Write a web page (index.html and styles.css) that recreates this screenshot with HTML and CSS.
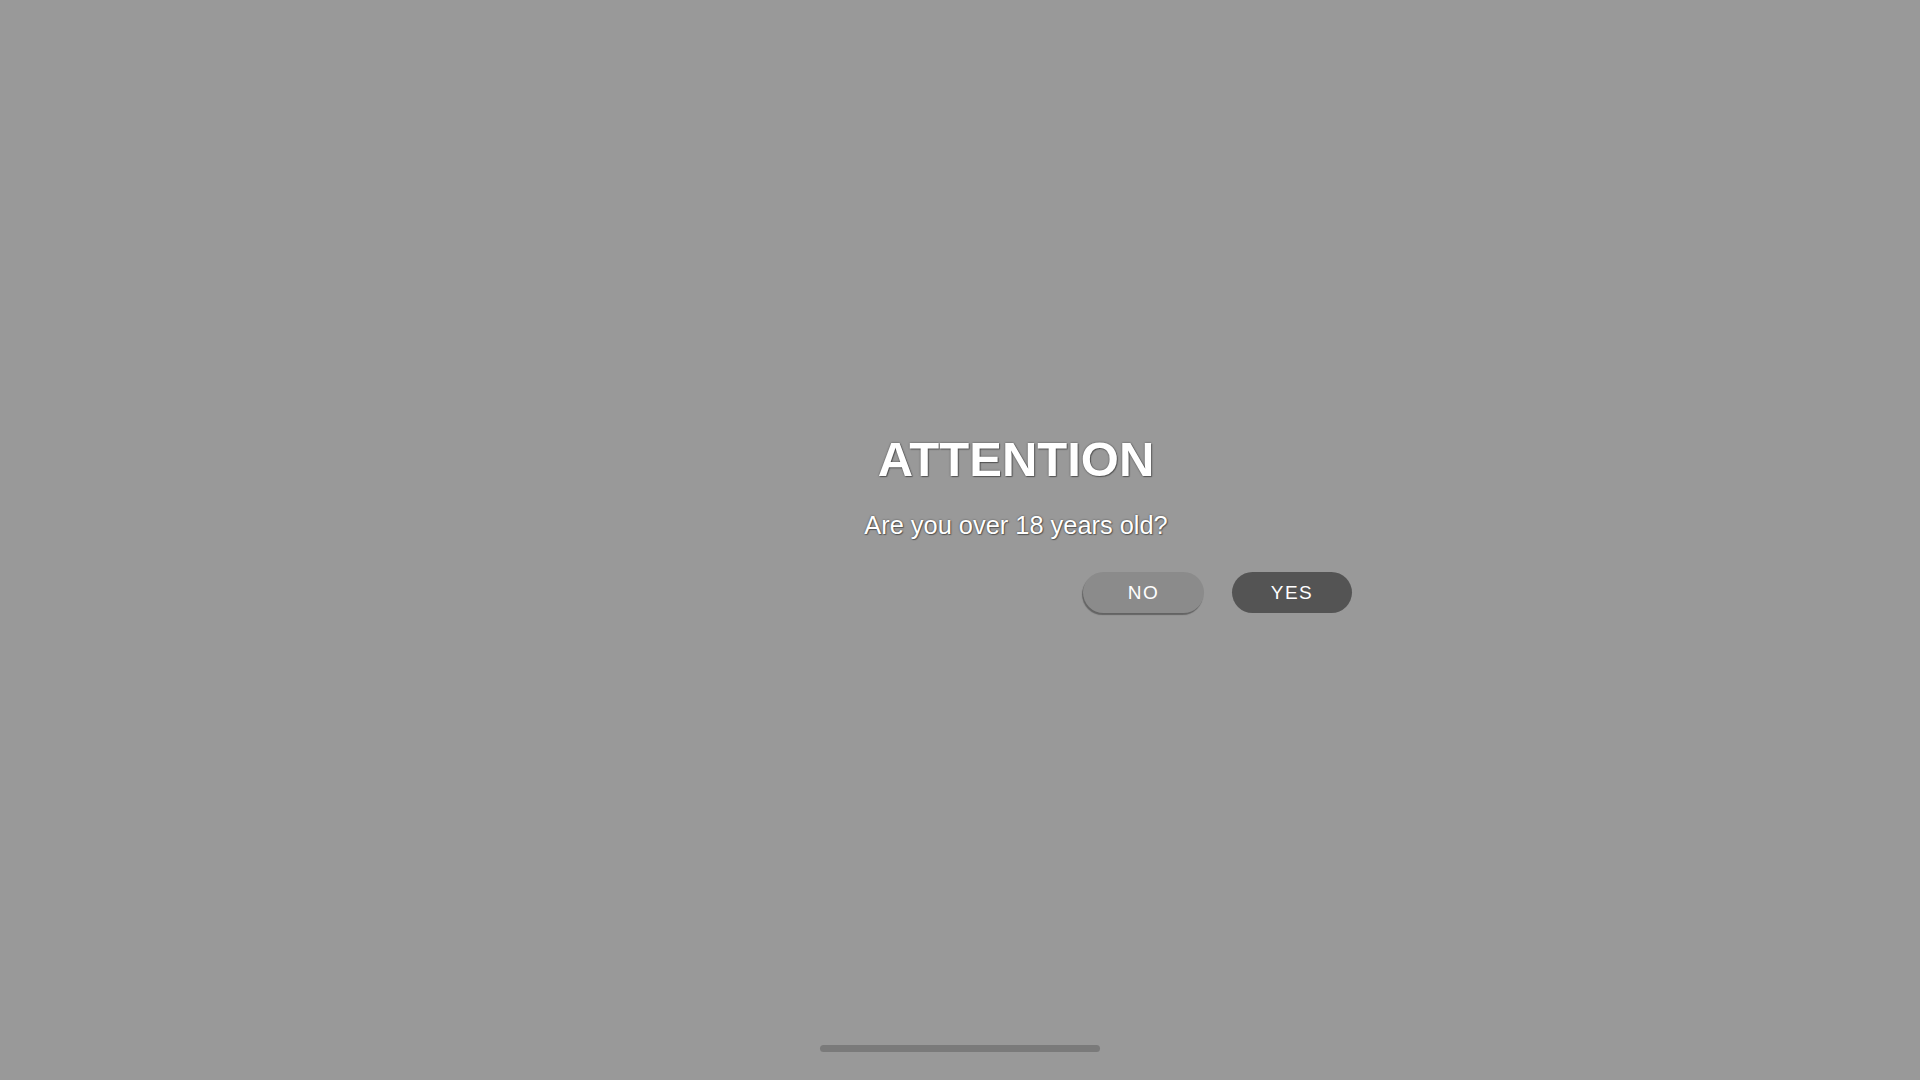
FILE: index.html
```html
<!DOCTYPE html>
<html lang="en">
<head>
<meta charset="utf-8">
<title>Attention</title>
<link rel="stylesheet" href="styles.css">
</head>
<body>
<div class="screen">
  <div class="stage">
    <div class="dialog">
      <h1 class="title">ATTENTION</h1>
      <p class="question">Are you over 18 years old?</p>
      <div class="actions">
        <button class="btn btn-no" type="button">NO</button>
        <button class="btn btn-yes" type="button">YES</button>
      </div>
    </div>
  </div>
  <div class="home-indicator"></div>
</div>
</body>
</html>
```
FILE: styles.css
```css
html, body {
  margin: 0;
  padding: 0;
}
body {
  background: #999999;
  font-family: "Liberation Sans", Arial, sans-serif;
  color: #ffffff;
}
.screen {
  height: 100vh;
  display: flex;
  flex-direction: column;
  align-items: center;
}
.stage {
  width: 100%;
  display: flex;
  justify-content: center;
  padding-left: 112px;
  box-sizing: border-box;
  padding-top: 431px;
}
.dialog {
  width: 672px;
  display: flex;
  flex-direction: column;
}
.title {
  margin: 0;
  font-size: 49px;
  line-height: 56px;
  font-weight: 700;
  text-align: center;
  text-shadow: 0 0 2px rgba(0,0,0,0.55), 1px 1px 1px rgba(0,0,0,0.35);
}
.question {
  margin: 23px 0 0;
  font-size: 25.4px;
  line-height: 30px;
  text-align: center;
  text-shadow: 0 0 2px rgba(0,0,0,0.55), 1px 1px 1px rgba(0,0,0,0.35);
}
.actions {
  margin-top: 32px;
  display: flex;
  justify-content: flex-end;
  gap: 28px;
}
.btn {
  width: 121px;
  height: 41px;
  border: none;
  border-radius: 21px;
  font-family: "Liberation Sans", Arial, sans-serif;
  font-size: 19px;
  letter-spacing: 1.5px;
  color: #ffffff;
  padding: 1px 0 0;
  cursor: pointer;
}
.btn-no {
  background: #8b8b8b;
  box-shadow: -1px 2px 1px rgba(0,0,0,0.35);
}
.btn-yes {
  width: 120px;
  background: #545454;
}
.home-indicator {
  margin-top: auto;
  margin-bottom: 28px;
  width: 280px;
  height: 7px;
  border-radius: 4px;
  background: #7a7a7a;
}
```
